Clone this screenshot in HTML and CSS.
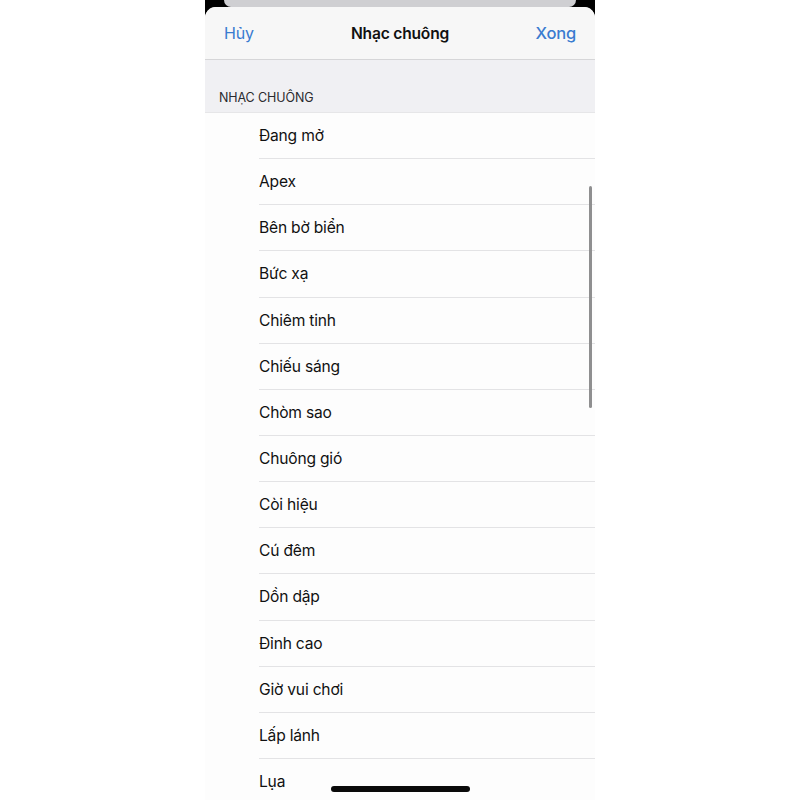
FILE: index.html
```html
<!DOCTYPE html>
<html lang="vi">
<head>
<meta charset="utf-8">
<link rel="stylesheet" href="styles.css">
</head>
<body>
<div class="phone">
  <div class="backdrop"><div class="back-card"></div></div>
  <div class="sheet">
    <header class="navbar">
      <span class="nav-btn">Hủy</span>
      <span class="nav-title">Nhạc chuông</span>
      <span class="nav-btn nav-done">Xong</span>
    </header>
    <div class="group-head">NHẠC CHUÔNG</div>
    <ul class="list">
      <li class="row">Đang mở</li>
      <li class="row">Apex</li>
      <li class="row">Bên bờ biển</li>
      <li class="row">Bức xạ</li>
      <li class="row">Chiêm tinh</li>
      <li class="row">Chiếu sáng</li>
      <li class="row">Chòm sao</li>
      <li class="row">Chuông gió</li>
      <li class="row">Còi hiệu</li>
      <li class="row">Cú đêm</li>
      <li class="row">Dồn dập</li>
      <li class="row">Đỉnh cao</li>
      <li class="row">Giờ vui chơi</li>
      <li class="row">Lấp lánh</li>
      <li class="row">Lụa</li>
    </ul>
  </div>
  <div class="scroll-ind"></div>
  <div class="home-ind"></div>
</div>
</body>
</html>
```
FILE: styles.css
```css
html, body {
  margin: 0;
  padding: 0;
  background: #ffffff;
}
body {
  font-family: "Inter", "Liberation Sans", sans-serif;
  height: 800px;
  overflow: hidden;
}
.phone {
  position: relative;
  width: 390px;
  height: 800px;
  margin: 0 auto;
  overflow: hidden;
  background: #000;
  display: flex;
  flex-direction: column;
}
.backdrop {
  height: 7px;
  display: flex;
  justify-content: center;
  background: #000;
  flex: none;
}
.back-card {
  width: 352px;
  height: 7px;
  background: #cfcfd2;
  border-radius: 0 0 8px 8px;
}
.sheet {
  flex: 1;
  background: #fdfdfd;
  border-radius: 11px 11px 0 0;
  overflow: hidden;
  display: flex;
  flex-direction: column;
}
.navbar {
  height: 52px;
  flex: none;
  display: flex;
  align-items: center;
  justify-content: space-between;
  padding: 0 19px 0 19px;
  background: #f7f7f7;
  border-bottom: 1px solid #d6d6d8;
  font-size: 16px;
  letter-spacing: -0.2px;
}
.nav-btn {
  color: #3a7bd0;
  width: 60px;
}
.nav-done {
  text-align: right;
  font-weight: 500;
  font-size: 16.5px;
}
.nav-title {
  font-weight: 600;
  color: #111;
  font-size: 15.6px;
}
.group-head {
  height: 53px;
  flex: none;
  box-sizing: border-box;
  background: #f0f0f3;
  padding: 30px 0 0 14px;
  font-size: 12.5px;
  color: #2a2a2e;
  letter-spacing: -0.1px;
  border-bottom: 1px solid #e6e6e8;
}
.list {
  list-style: none;
  margin: 0;
  padding: 0 0 0 54px;
  background: #fdfdfd;
}
.row {
  height: 45.15px;
  display: flex;
  align-items: center;
  border-bottom: 1px solid #e3e3e5;
  font-size: 15.6px;
  color: #111;
  letter-spacing: -0.2px;
}
.scroll-ind {
  position: absolute;
  right: 3px;
  top: 186px;
  width: 3px;
  height: 222px;
  border-radius: 2px;
  background: #8f8f90;
}
.home-ind {
  position: absolute;
  left: 126px;
  top: 786px;
  width: 139px;
  height: 6px;
  border-radius: 3px;
  background: #0a0a0a;
}
```
